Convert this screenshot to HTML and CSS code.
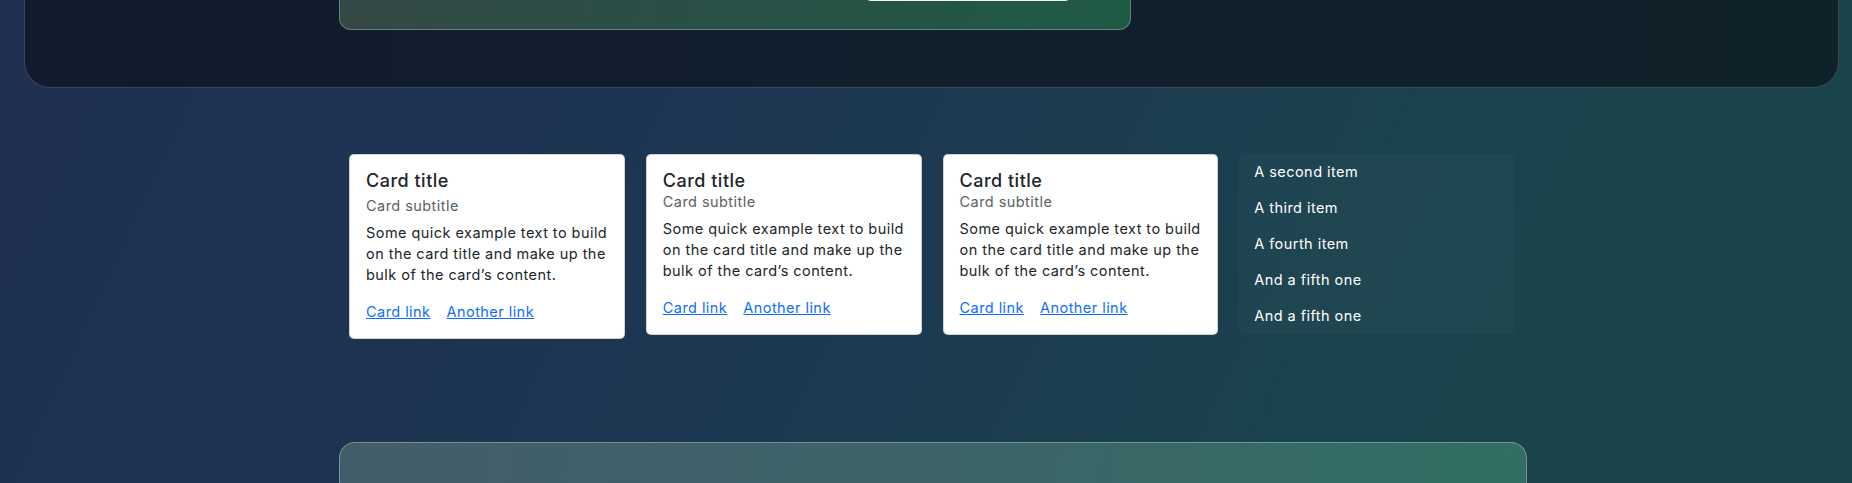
FILE: index.html
```html
<!DOCTYPE html>
<html lang="en">
<head>
<meta charset="utf-8">
<title>Cards</title>
<link rel="stylesheet" href="styles.css">
</head>
<body>
  <header class="hero">
    <div class="hero-panel">
      <div class="hero-button"></div>
    </div>
  </header>

  <section class="card-row">
    <div class="card">
      <h5 class="card-title">Card title</h5>
      <h6 class="card-subtitle spaced">Card subtitle</h6>
      <p class="card-text">Some quick example text to build on the card title and make up the bulk of the card’s content.</p>
      <div class="card-links"><a href="#" class="card-link">Card link</a><a href="#" class="card-link">Another link</a></div>
    </div>
    <div class="card">
      <h5 class="card-title">Card title</h5>
      <h6 class="card-subtitle">Card subtitle</h6>
      <p class="card-text">Some quick example text to build on the card title and make up the bulk of the card’s content.</p>
      <div class="card-links"><a href="#" class="card-link">Card link</a><a href="#" class="card-link">Another link</a></div>
    </div>
    <div class="card">
      <h5 class="card-title">Card title</h5>
      <h6 class="card-subtitle">Card subtitle</h6>
      <p class="card-text">Some quick example text to build on the card title and make up the bulk of the card’s content.</p>
      <div class="card-links"><a href="#" class="card-link">Card link</a><a href="#" class="card-link">Another link</a></div>
    </div>
    <ul class="list-group">
      <li class="list-item">A second item</li>
      <li class="list-item">A third item</li>
      <li class="list-item">A fourth item</li>
      <li class="list-item">And a fifth one</li>
      <li class="list-item">And a fifth one</li>
    </ul>
  </section>

  <section class="bottom-panel"></section>
</body>
</html>
```

FILE: styles.css
```css
html {
  height: 100%;
  overflow: hidden;
  background: linear-gradient(115deg, #1f2f51 0%, #1d3652 40%, #1a424d 70%, #19444a 100%);
}

body {
  margin: 0;
  height: 100%;
  overflow: hidden;
  font-family: Inter, "Open Sans", sans-serif;
  font-size: 14.5px;
  letter-spacing: 0.45px;
  color: #212529;
}

.hero {
  box-sizing: border-box;
  height: 189px;
  margin: -101px 13px 0 24px;
  border: 1px solid rgba(255, 255, 255, 0.18);
  border-top: none;
  border-radius: 0 0 26px 26px;
  background: linear-gradient(90deg, #121a2d 0%, #111f2d 50%, #0f2129 100%);
  display: flex;
  flex-direction: column;
  justify-content: flex-end;
  padding: 0 0 57px 314px;
}

.hero-panel {
  box-sizing: border-box;
  width: 792px;
  height: 110px;
  border: 1px solid rgba(255, 255, 255, 0.28);
  border-top: none;
  border-radius: 0 0 12px 12px;
  background: linear-gradient(100deg, #354846 0%, #2a4f47 45%, #1f5a45 100%);
  display: flex;
  flex-direction: column;
  justify-content: flex-end;
  padding: 0 0 28px 527px;
}

.hero-button {
  width: 202px;
  height: 40px;
  background: #f4f5f5;
  border-radius: 0 0 4px 4px;
}

.card-row {
  display: grid;
  grid-template-columns: repeat(4, 1fr);
  column-gap: 21px;
  width: 1166px;
  margin: 66px 0 0 349px;
  align-items: start;
}

.card {
  background: #fff;
  border: 1px solid rgba(0, 0, 0, 0.18);
  border-radius: 5px;
  padding: 16px 16px 16px;
}

.card-title {
  margin: 0;
  font-size: 18px;
  line-height: 20px;
  letter-spacing: 0.5px;
  font-weight: 500;
  color: #212529;
}

.card-subtitle {
  margin: 1px 0 0;
  font-size: 14.5px;
  line-height: 20px;
  font-weight: 400;
  color: #5b5f63;
}

.card-subtitle.spaced {
  margin-top: 5px;
}

.card-text {
  margin: 6px 0 0;
  font-size: 14.5px;
  line-height: 21px;
  color: #212529;
}

.card-links {
  margin-top: 16px;
  line-height: 21px;
  display: flex;
  gap: 16px;
}

.card-link {
  color: #0d6efd;
  text-decoration: underline;
}

.list-group {
  list-style: none;
  margin: 0;
  padding: 0;
  border-radius: 6px;
  background: rgba(255, 255, 255, 0.025);
}

.list-item {
  height: 36px;
  line-height: 36px;
  padding: 0 15px;
  color: #ffffff;
  font-size: 14.5px;
  font-weight: 400;
}

.bottom-panel {
  box-sizing: border-box;
  width: 1188px;
  height: 200px;
  margin: 103px 0 0 339px;
  border: 1px solid rgba(255, 255, 255, 0.3);
  border-radius: 16px;
  background: linear-gradient(100deg, #435c6a 0%, #3c6468 50%, #306f63 100%);
}
```
